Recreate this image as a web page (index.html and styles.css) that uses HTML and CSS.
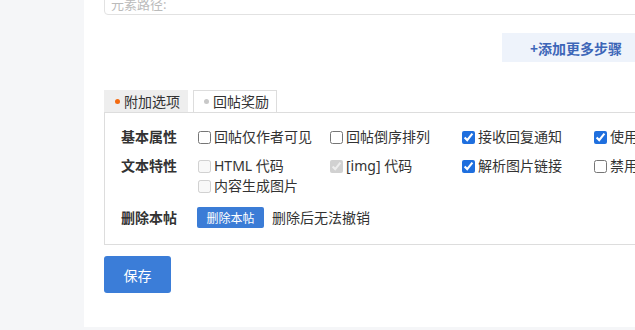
FILE: index.html
```html
<!DOCTYPE html>
<html lang="zh-CN">
<head>
<meta charset="UTF-8">
<meta name="viewport" content="width=device-width, initial-scale=1.0">
<title>发帖选项</title>
<link rel="stylesheet" href="styles.css">
</head>
<body>

<div class="layout">
  <div class="sidebar"></div>
  <div class="main">
    <div class="content">
      <div class="path-input">元素路径:</div>

      <div class="step-bar">
        <button type="button" class="add-step">+添加更多步骤</button>
      </div>

      <div class="tabs">
        <div class="tab active"><span class="dot"></span>附加选项</div>
        <div class="tab"><span class="dot"></span>回帖奖励</div>
      </div>

      <div class="options-panel">
        <div class="option-row">
          <div class="option-label">基本属性</div>
          <div class="option-list">
            <label class="option"><input type="checkbox">回帖仅作者可见</label>
            <label class="option"><input type="checkbox">回帖倒序排列</label>
            <label class="option"><input type="checkbox" checked>接收回复通知</label>
            <label class="option"><input type="checkbox" checked>使用个人签名</label>
          </div>
        </div>

        <div class="option-row wide-gap">
          <div class="option-label">文本特性</div>
          <div class="option-list">
            <label class="option"><input type="checkbox" disabled>HTML 代码</label>
            <label class="option"><input type="checkbox" checked disabled>[img] 代码</label>
            <label class="option"><input type="checkbox" checked>解析图片链接</label>
            <label class="option"><input type="checkbox">禁用表情</label>
            <label class="option"><input type="checkbox" disabled>内容生成图片</label>
          </div>
        </div>

        <div class="option-row centered">
          <div class="option-label">删除本帖</div>
          <button type="button" class="delete-button">删除本帖</button>
          <span class="hint">删除后无法撤销</span>
        </div>
      </div>

      <button type="submit" class="save-button">保存</button>
    </div>
  </div>
</div>

</body>
</html>
```

FILE: styles.css
```css
body {
  margin: 0;
  overflow: hidden;
  background-color: #f5f6f8;
  font-family: 'Noto Sans', 'Noto Sans CJK SC', sans-serif;
  font-size: 14px;
  color: #333;
}

.layout {
  display: flex;
  width: 780px;
}

.sidebar {
  width: 84px;
  flex-shrink: 0;
}

.main {
  flex: 1;
  height: 327px;
  background-color: #fff;
  padding-left: 20px;
}

.content {
  width: 546px;
}

.path-input {
  height: 20px;
  margin-top: -23px;
  padding: 16px 6px 0;
  border: 1px solid #e2e2e2;
  border-radius: 4px;
  color: #bbb;
  font-size: 13px;
  line-height: 20px;
}

.step-bar {
  display: flex;
  justify-content: flex-end;
  margin-top: 18px;
}

.add-step {
  height: 29px;
  padding: 0 28px;
  border: none;
  background-color: #eef3fb;
  color: #3d66b8;
  font-family: inherit;
  font-size: 14px;
  font-weight: bold;
  cursor: pointer;
}

.tabs {
  display: flex;
  gap: 5px;
  margin-top: 28px;
}

.tab {
  display: flex;
  align-items: center;
  height: 21px;
  padding: 0 7px 0 10px;
  border: 1px solid #ddd;
  border-bottom: none;
  background-color: #fff;
  line-height: 21px;
}

.tab.active {
  border-color: #eee;
  background-color: #eee;
}

.dot {
  width: 5px;
  height: 5px;
  margin-right: 4px;
  border-radius: 50%;
  background-color: #c8c8c8;
}

.tab.active .dot {
  background-color: #f36a10;
}

.options-panel {
  padding: 14px 16px 16px;
  border: 1px solid #ddd;
}

.option-row {
  display: flex;
  align-items: flex-start;
  line-height: 20px;
  margin-bottom: 9px;
}

.option-row.wide-gap {
  margin-bottom: 11px;
}

.option-row.centered {
  align-items: center;
  margin-bottom: 0;
}

.option-label {
  width: 77px;
  flex-shrink: 0;
  font-weight: bold;
}

.option-list {
  display: flex;
  flex-wrap: wrap;
  width: 528px;
  flex-shrink: 0;
}

.option {
  display: flex;
  align-items: center;
  width: 132px;
  white-space: nowrap;
}

.option input {
  width: 13px;
  height: 13px;
  margin: 0 3px 0 0;
  accent-color: #1f6fde;
}

.delete-button {
  width: 67px;
  height: 21px;
  padding: 0;
  margin-left: -1px;
  border: none;
  border-radius: 2px;
  background-color: #3b7cd6;
  color: #fff;
  font-family: inherit;
  font-size: 12px;
  cursor: pointer;
}

.hint {
  margin-left: 8px;
}

.save-button {
  width: 67px;
  height: 37px;
  margin-top: 11px;
  border: none;
  border-radius: 3px;
  background-color: #3b7dd8;
  color: #fff;
  font-family: inherit;
  font-size: 14px;
  cursor: pointer;
}
```
